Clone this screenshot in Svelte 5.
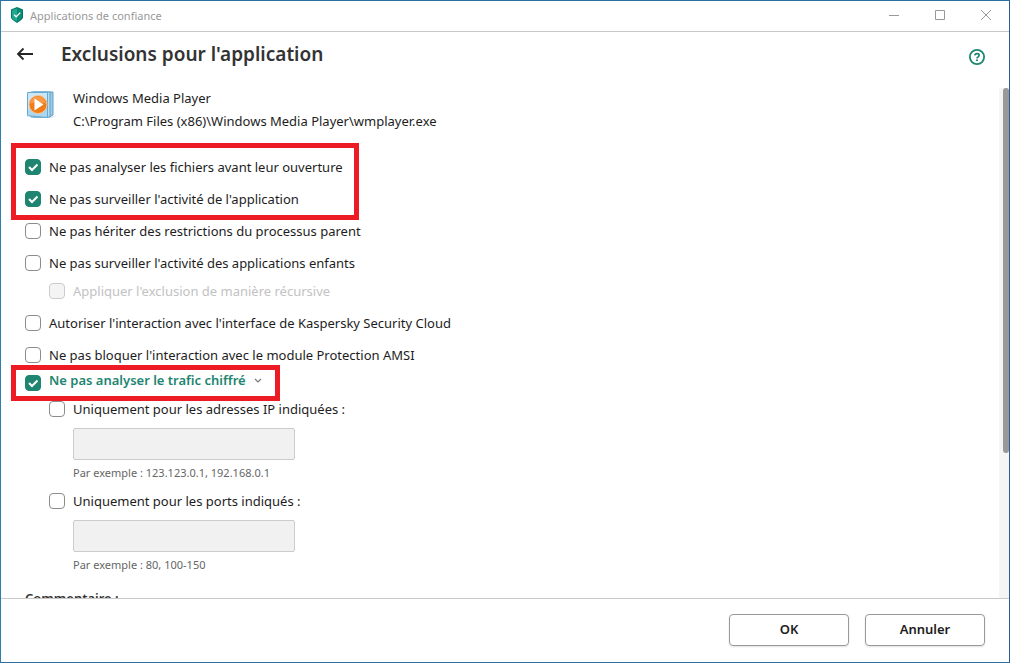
<script lang="ts">
  type Option = { id: string; label: string; checked: boolean };

  let watched = $state<Option[]>([
    { id: 'open', label: 'Ne pas analyser les fichiers avant leur ouverture', checked: true },
    { id: 'activity', label: "Ne pas surveiller l'activité de l'application", checked: true }
  ]);

  let inherited = $state<Option[]>([
    { id: 'parent', label: 'Ne pas hériter des restrictions du processus parent', checked: false },
    { id: 'children', label: "Ne pas surveiller l'activité des applications enfants", checked: false }
  ]);

  let interaction = $state<Option[]>([
    { id: 'ui', label: "Autoriser l'interaction avec l'interface de Kaspersky Security Cloud", checked: false },
    { id: 'amsi', label: "Ne pas bloquer l'interaction avec le module Protection AMSI", checked: false }
  ]);

  let limits = $state([
    { id: 'ip', label: 'Uniquement pour les adresses IP indiquées :', hint: 'Par exemple : 123.123.0.1, 192.168.0.1', checked: false, value: '' },
    { id: 'ports', label: 'Uniquement pour les ports indiqués :', hint: 'Par exemple : 80, 100-150', checked: false, value: '' }
  ]);

  let recursive = $state(false);
  let traffic = $state(true);
  let expanded = $state(true);
  let comment = $state('');

  let viewHeight = $state(1);
  let contentHeight = $state(1);
  let scrollTop = $state(0);

  let thumbHeight = $derived(Math.min(100, (viewHeight / contentHeight) * 100));
  let thumbTop = $derived((scrollTop / contentHeight) * viewHeight);
</script>

{#snippet optionRow(option: Option)}
  <div class="row">
    <input type="checkbox" id={option.id} bind:checked={option.checked} />
    <label for={option.id}>{option.label}</label>
  </div>
{/snippet}

<div class="window">
  <header class="titlebar">
    <svg class="shield" width="14" height="16" viewBox="0 0 14 16" aria-hidden="true">
      <path d="M7 0 13 2.6V10.6Q13 12.6 7 16 1 12.6 1 10.6V2.6Z" fill="#00776a" />
      <path d="M7 1.2 12 3.3V10.2Q12 12 7 14.7Z" fill="#0b8a76" />
      <path d="M7 1.2 2 3.3V10.2Q2 12 7 14.7Z" fill="#1da88f" />
      <path d="m4 7.6 2.2 2.2L10.3 5.6" fill="none" stroke="#fff" stroke-width="1.3" />
    </svg>
    <span class="caption">Applications de confiance</span>
    <div class="controls">
      <button type="button" aria-label="Réduire">
        <svg width="12" height="12" viewBox="0 0 12 12"><path d="M1 5.5h10" /></svg>
      </button>
      <button type="button" aria-label="Agrandir">
        <svg width="12" height="12" viewBox="0 0 12 12"><path d="M1.5 .5h9v9h-9z" /></svg>
      </button>
      <button type="button" aria-label="Fermer">
        <svg width="12" height="12" viewBox="0 0 12 12"><path d="m1 0 10 10M11 0 1 10" /></svg>
      </button>
    </div>
  </header>

  <div class="heading">
    <button type="button" class="back" aria-label="Retour">
      <svg width="18" height="14" viewBox="0 0 18 14">
        <path d="M17 7H2M7.5 1.5 2 7l5.5 5.5" fill="none" stroke="#262626" stroke-width="1.8" />
      </svg>
    </button>
    <h1>Exclusions pour l'application</h1>
    <button type="button" class="help" aria-label="Aide">
      <svg width="18" height="18" viewBox="0 0 18 18" fill="none" stroke="#1d8570">
        <circle cx="9" cy="9" r="7.1" stroke-width="1.8" />
        <path d="M6.9 7.4Q7 5.7 9 5.7T11.1 7.3Q11.1 8.3 10 8.9 9 9.4 9 10.4" stroke-width="1.7" />
        <path d="M9 11.4v1.7" stroke-width="1.9" />
      </svg>
    </button>
  </div>

  <div class="body">
    <main bind:clientHeight={viewHeight} onscroll={(e) => (scrollTop = e.currentTarget.scrollTop)}>
      <div class="content" bind:clientHeight={contentHeight}>
        <section class="app-info">
          <svg width="32" height="32" viewBox="0 0 32 32" aria-hidden="true">
            <path d="m24 29 8-1-6 2z" fill="#dedede" />
            <path d="M8 4h20v23l-4 2H8z" fill="#9dcbe6" stroke="#5a9fc8" />
            <path d="M6 4h19v25H6z" fill="#b9ddf1" stroke="#5a9fc8" />
            <path d="M2.5 4.5h20v25l-20-1.8z" fill="#acd7ef" stroke="#68a9cf" />
            <path d="M3 5h19v7Q13 13 3 22z" fill="#cbe7f6" />
            <circle cx="13" cy="16.5" r="9" fill="#f17b16" stroke="#f9c48d" />
            <path d="M5 15.5Q6.5 8.5 13 8.5t8 7Q13 13.5 5 15.5z" fill="#f79a47" />
            <path d="m9.5 10.5 9 6-9 6z" fill="#fff" />
          </svg>
          <div class="app-text">
            <div>Windows Media Player</div>
            <div>C:\Program Files (x86)\Windows Media Player\wmplayer.exe</div>
          </div>
        </section>

        <div class="marked">
          {#each watched as option (option.id)}
            {@render optionRow(option)}
          {/each}
        </div>

        {#each inherited as option (option.id)}
          {@render optionRow(option)}
        {/each}

        <div class="row sub">
          <input type="checkbox" id="recursive" bind:checked={recursive} disabled={!inherited[1].checked} />
          <label for="recursive">Appliquer l'exclusion de manière récursive</label>
        </div>

        {#each interaction as option (option.id)}
          {@render optionRow(option)}
        {/each}

        <div class="marked traffic">
          <input type="checkbox" id="traffic" bind:checked={traffic} />
          <label for="traffic">Ne pas analyser le trafic chiffré</label>
          <button type="button" aria-label="Détails" aria-expanded={expanded} onclick={() => (expanded = !expanded)}>
            <svg width="8" height="6" viewBox="0 0 8 6"><path d="m1 1 3 3 3-3" fill="none" stroke="#777" stroke-width="1.2" /></svg>
          </button>
        </div>

        {#if expanded}
          {#each limits as limit (limit.id)}
            <div class="limit">
              <div class="limit-row">
                <input type="checkbox" id={limit.id} bind:checked={limit.checked} />
                <label for={limit.id}>{limit.label}</label>
              </div>
              <input
                type="text"
                aria-label={limit.label}
                aria-describedby="{limit.id}-hint"
                bind:value={limit.value}
                disabled={!limit.checked}
              />
              <div class="hint" id="{limit.id}-hint">{limit.hint}</div>
            </div>
          {/each}
        {/if}

        <div class="comment">
          <label for="comment">Commentaire :</label>
          <textarea id="comment" bind:value={comment}></textarea>
        </div>
      </div>
    </main>
    <div class="scrollbar">
      <div class="thumb" style="height: {thumbHeight}%; margin-top: {thumbTop}px"></div>
    </div>
  </div>

  <footer>
    <button type="button">OK</button>
    <button type="button">Annuler</button>
  </footer>
</div>

<style>
  :global(body) {
    background: #fff;
  }

  .window {
    display: flex;
    flex-direction: column;
    box-sizing: border-box;
    height: 100vh;
    border: 1px solid;
    border-color: #2b6fa3 #2a5c98 #2b6fa3 #2a7fac;
    background: #fff;
    color: #1d1d1d;
    font-family: 'Noto Sans', 'Open Sans', sans-serif;
    font-size: 13px;
    line-height: 20px;
  }

  button {
    display: flex;
    align-items: center;
    justify-content: center;
    padding: 0;
    border: none;
    background: transparent;
    color: inherit;
    font: inherit;
    cursor: pointer;
  }

  .titlebar {
    display: flex;
    align-items: center;
    height: 30px;
    padding-left: 9px;
    border-bottom: 1px solid #c8c8c8;
  }
  .shield { margin-bottom: 2px; }
  .caption {
    flex: 1;
    margin-left: 6px;
    color: #999;
    font-size: 11px;
  }
  .controls {
    display: flex;
    align-self: stretch;
  }
  .controls button { width: 46px; }
  .controls svg {
    fill: none;
    stroke: #999;
  }

  .heading {
    display: flex;
    align-items: center;
    height: 44px;
    padding: 0 23px 12px 15px;
  }
  h1 {
    flex: 1;
    margin: 0 0 0 27px;
    color: #333;
    font-size: 19px;
    font-weight: 600;
    line-height: 28px;
  }
  .help { margin-top: 6px; }

  .body {
    display: flex;
    flex: 1;
    min-height: 0;
  }
  main {
    flex: 1;
    overflow-y: auto;
    scrollbar-width: none;
  }
  .content { padding: 0 24px 16px; }

  .scrollbar {
    width: 10px;
    background: #f5f5f5;
  }
  .thumb {
    width: 6px;
    margin-left: 4px;
    border-radius: 3px;
    background: #999;
  }

  .app-info {
    display: flex;
    gap: 16px;
    height: 63px;
  }
  .app-text {
    display: flex;
    flex-direction: column;
    gap: 3px;
  }

  input[type='checkbox'] {
    flex-shrink: 0;
    appearance: none;
    width: 16px;
    height: 16px;
    margin: 0;
    border: 1px solid #8c8c8c;
    border-radius: 4px;
    background: #fff;
  }
  input[type='checkbox']:checked {
    border-color: #1d8570;
    background: #1d8570 url("data:image/svg+xml,%3Csvg xmlns='http://www.w3.org/2000/svg' viewBox='0 0 14 14'%3E%3Cpath d='m3 7 3 3 5.5-5.5' fill='none' stroke='white' stroke-width='2'/%3E%3C/svg%3E") center / 14px no-repeat;
  }
  input[type='checkbox']:disabled {
    border-color: #ccc;
    background: #f4f4f4;
  }
  input:disabled + label { color: #c2c2c2; }

  .row,
  .limit-row {
    display: flex;
    align-items: center;
    gap: 8px;
    height: 32px;
  }
  .row.sub {
    height: 24px;
    margin: 0 0 4px 24px;
  }

  /* red frame drawn over the neighbouring rows */
  .marked {
    position: relative;
    width: fit-content;
  }
  .marked::after {
    content: '';
    position: absolute;
    inset: -8px -16px -5px -14px;
    border: 5px solid #ed1c24;
    pointer-events: none;
  }

  .traffic {
    display: flex;
    gap: 8px;
    height: 23px;
    color: #1d8570;
    font-weight: 600;
    line-height: 18px;
  }
  .traffic::after { inset: -6px -18px -7px -14px; }
  .traffic input[type='checkbox'] { margin-top: 4px; }
  .traffic button { height: 20px; }

  .limit { margin-left: 24px; }
  .limit-row { height: 30px; }
  .limit input[type='text'] {
    display: block;
    box-sizing: border-box;
    width: 222px;
    height: 32px;
    margin: 4px 0 0 24px;
    padding: 0 8px;
    border: 1px solid #999;
    border-radius: 2px;
    background: #fff;
    font: inherit;
  }
  .limit input[type='text']:disabled {
    border-color: #ccc;
    background: #f1f1f1;
  }
  .hint {
    margin-left: 24px;
    color: #666;
    font-size: 11px;
    line-height: 26px;
  }

  .comment {
    display: flex;
    flex-direction: column;
    gap: 4px;
    margin-top: 10px;
    color: #333;
    font-weight: 600;
  }
  textarea {
    height: 172px;
    box-sizing: border-box;
    border: 1px solid #999;
    border-radius: 2px;
    resize: none;
    font: inherit;
  }

  footer {
    display: flex;
    justify-content: flex-end;
    gap: 16px;
    padding: 15px 24px 16px;
    border-top: 1px solid #c8c8c8;
  }
  footer button {
    box-sizing: border-box;
    width: 120px;
    height: 32px;
    padding-bottom: 2px;
    border: 1px solid #999;
    border-radius: 4px;
    box-shadow: 0 1px 2px rgba(0, 0, 0, 0.12);
    font-weight: 600;
  }
</style>
